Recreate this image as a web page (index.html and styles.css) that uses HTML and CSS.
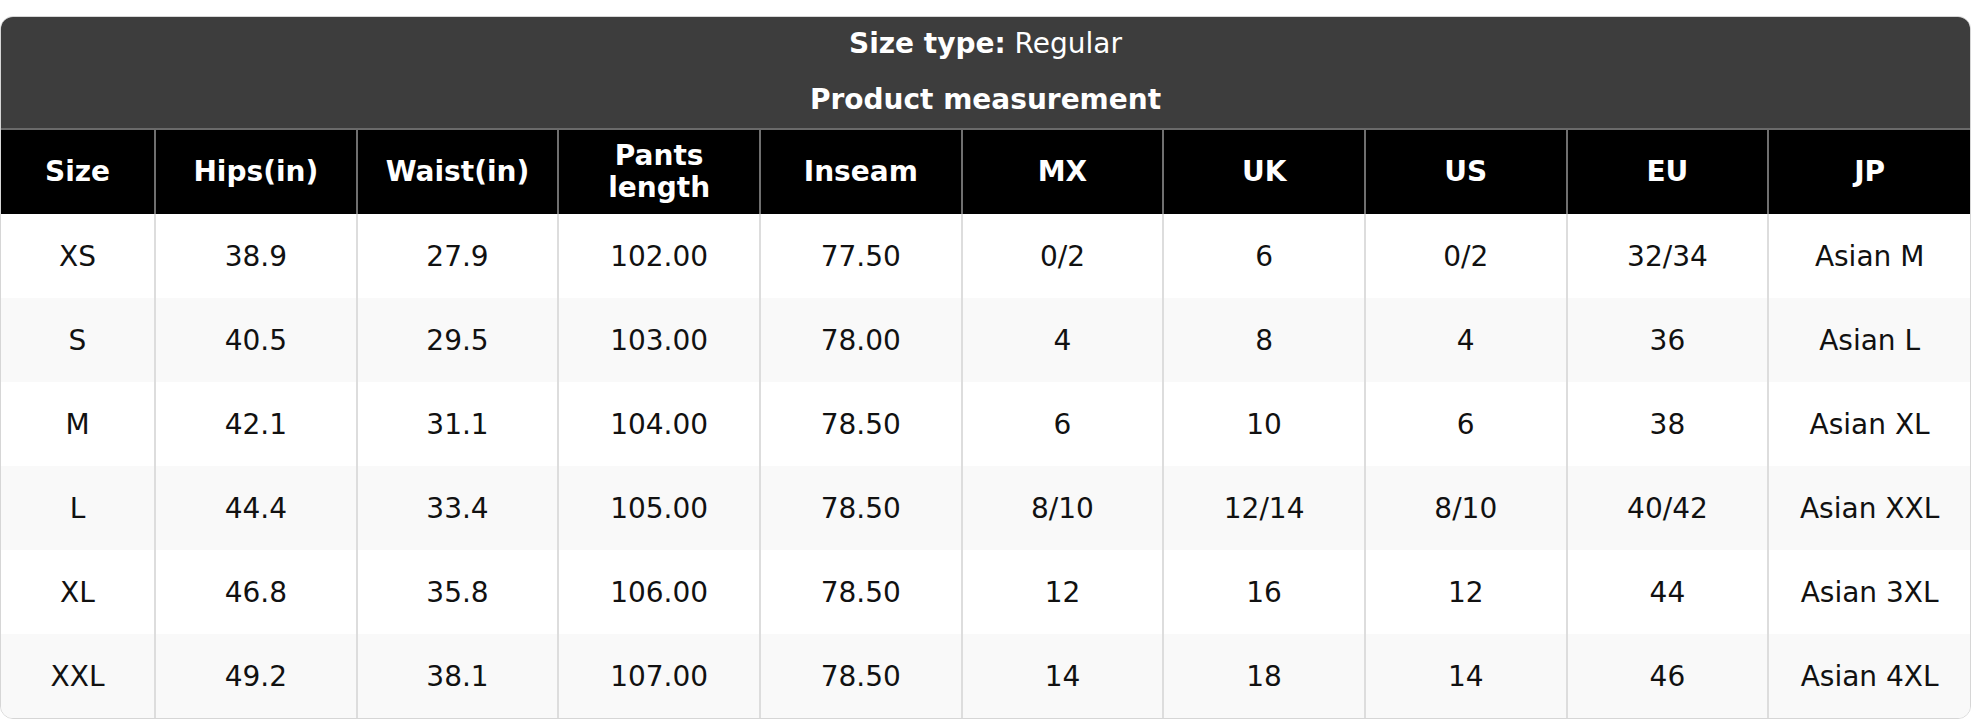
FILE: index.html
```html
<!DOCTYPE html>
<html>
<head>
<meta charset="utf-8">
<link rel="stylesheet" href="styles.css">
</head>
<body>
<div class="card">
  <div class="caption">
    <div class="cap-line"><b>Size type:</b> Regular</div>
    <div class="cap-line"><b>Product measurement</b></div>
  </div>
  <table class="sizes">
    <colgroup>
      <col class="c-first">
      <col><col><col><col><col><col><col><col><col>
    </colgroup>
    <thead>
      <tr>
        <th>Size</th><th>Hips(in)</th><th>Waist(in)</th><th>Pants<br>length</th><th>Inseam</th><th>MX</th><th>UK</th><th>US</th><th>EU</th><th>JP</th>
      </tr>
    </thead>
    <tbody>
      <tr><td>XS</td><td>38.9</td><td>27.9</td><td>102.00</td><td>77.50</td><td>0/2</td><td>6</td><td>0/2</td><td>32/34</td><td>Asian M</td></tr>
      <tr><td>S</td><td>40.5</td><td>29.5</td><td>103.00</td><td>78.00</td><td>4</td><td>8</td><td>4</td><td>36</td><td>Asian L</td></tr>
      <tr><td>M</td><td>42.1</td><td>31.1</td><td>104.00</td><td>78.50</td><td>6</td><td>10</td><td>6</td><td>38</td><td>Asian XL</td></tr>
      <tr><td>L</td><td>44.4</td><td>33.4</td><td>105.00</td><td>78.50</td><td>8/10</td><td>12/14</td><td>8/10</td><td>40/42</td><td>Asian XXL</td></tr>
      <tr><td>XL</td><td>46.8</td><td>35.8</td><td>106.00</td><td>78.50</td><td>12</td><td>16</td><td>12</td><td>44</td><td>Asian 3XL</td></tr>
      <tr><td>XXL</td><td>49.2</td><td>38.1</td><td>107.00</td><td>78.50</td><td>14</td><td>18</td><td>14</td><td>46</td><td>Asian 4XL</td></tr>
    </tbody>
  </table>
</div>
</body>
</html>
```
FILE: styles.css
```css
html, body {
  margin: 0;
  padding: 0;
  background: #ffffff;
}
body {
  padding-top: 16px;
  font-family: "DejaVu Sans", "Liberation Sans", sans-serif;
  color: #111111;
}
.card {
  width: 1971px;
  box-sizing: border-box;
  border: 1px solid #d6d6d6;
  border-radius: 13px;
  overflow: hidden;
  background: #ffffff;
}
.caption {
  background: #3d3d3d;
  color: #ffffff;
  text-align: center;
  font-size: 28px;
}
.cap-line {
  height: 57px;
  line-height: 57px;
}
.cap-line:first-child {
  height: 54px;
  line-height: 54px;
}
.sizes {
  width: 100%;
  border-collapse: collapse;
  table-layout: fixed;
  font-size: 28px;
}
.c-first {
  width: 154px;
}
.sizes th {
  background: #000000;
  color: #ffffff;
  font-weight: bold;
  height: 85px;
  line-height: 32px;
  padding: 0;
  border-top: 2px solid #6a6a6a;
  border-left: 2px solid #6f6f6f;
  text-align: center;
  vertical-align: middle;
  box-sizing: border-box;
}
.sizes td {
  height: 84px;
  padding: 0;
  text-align: center;
  vertical-align: middle;
  border-left: 2px solid #dddddd;
  box-sizing: border-box;
}
.sizes th:first-child,
.sizes td:first-child {
  border-left: none;
}
.sizes tbody tr:nth-child(even) td {
  background: #f9f9f9;
}
```
